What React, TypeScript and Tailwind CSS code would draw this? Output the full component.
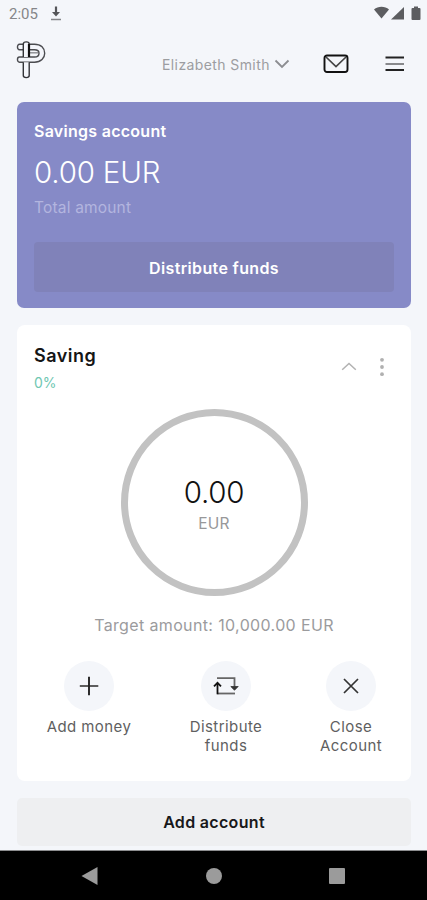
import type { ReactNode } from 'react'

function StatusBar() {
  return (
    <div className="flex h-[27px] items-center justify-between pl-[9px] pr-[6px]">
      <div className="flex items-center gap-[13px]">
        <span className="pt-px font-['Roboto',sans-serif] text-[15px] leading-none text-[#858689]">2:05</span>
        <svg className="-ml-px h-4 w-[12px]" viewBox="0 0 12 16" fill="none">
          <path d="M6 .5v8" stroke="#555659" strokeWidth="2.200" />
          <path d="M2 6h8L6 10.500z" fill="#555659" />
          <path d="M1 13.500h10" stroke="#858689" strokeWidth="1.500" />
        </svg>
      </div>
      <svg className="h-[15px] w-[48px]" viewBox="0 0 48 15" fill="#5c5d60">
        <path d="M1 3.500C5-.2 12-.2 16 3.500L8.500 12.500z" />
        <path d="M18 13.500L31 1v12.500z" />
        <path d="M38.500 3q0-1 1-1H41V.5h4V2h1.500q1 0 1 1v10q0 1-1 1h-7q-1 0-1-1z" />
      </svg>
    </div>
  )
}

function Logo() {
  return (
    <svg className="h-[38px] w-[30px]" viewBox="0 0 30 38" fill="none" strokeWidth="1.400">
      <path
        d="M3.500 3.200H18.500C25 3.200 28.700 7.300 28.700 12.200S25 21.200 18.500 21.200H3.500C.8 21.200 .8 16 3.500 16H18.500C21.500 16 23 14.500 23 12.200S21.500 8.700 18.500 8.700H3.500C.8 8.700 .8 3.200 3.500 3.200z"
        stroke="#4b4c50"
        fill="#f4f6fb"
      />
      <path d="M14 11.800h8" stroke="#8b8c90" />
      <path d="M7.300 16V3C7.300.2 13.200.2 13.200 3V16" stroke="#333438" fill="#f4f6fb" />
      <path d="M7.300 21.200V34.500C7.300 37.300 13.200 37.300 13.200 34.500V21.200" stroke="#333438" fill="#f4f6fb" />
      <path d="M13 3V16" stroke="#111" strokeWidth="2.200" />
    </svg>
  )
}

function Header() {
  return (
    <header className="flex h-[75px] items-start justify-between pl-4 pr-[22px] pt-[14px]">
      <Logo />
      <div className="flex h-[46px] items-center">
        <button className="flex items-center text-[14px] leading-none tracking-[.4px] text-[#9c9da1]">
          <span className="w-[108px] whitespace-nowrap pt-px text-left">Elizabeth Smith</span>
          <svg className="ml-1 h-[10px] w-4" viewBox="0 0 16 10" fill="none" stroke="#8c8d91" strokeWidth="1.800">
            <path d="M1.500 1.500L8 8l6.500-6.500" />
          </svg>
        </button>
        <svg className="ml-[33px] h-5 w-[26px]" viewBox="0 0 26 20" fill="none" stroke="#111">
          <rect x="1.500" y="1.500" width="23" height="16.500" rx="2.500" strokeWidth="1.900" />
          <path d="M3 3l10 9.500L23 3" stroke="#444" strokeWidth="1.700" />
        </svg>
        <svg className="ml-9 h-4 w-5" viewBox="0 0 20 16" fill="none" strokeWidth="2">
          <path d="M.5 1.500h18.500M.5 14h18.500" stroke="#222" />
          <path d="M.5 8h18.500" stroke="#88898c" />
        </svg>
      </div>
    </header>
  )
}

function Action({ label, className, children }: { label: string; className: string; children: ReactNode }) {
  return (
    <button className={className}>
      <span className="flex size-[50px] items-center justify-center rounded-full bg-[#f4f6fa]">{children}</span>
      <span className="mt-[6px] text-center text-[15px] leading-[19px] tracking-[.42px] text-[#5f5f61]">{label}</span>
    </button>
  )
}

export default function App() {
  return (
    <div className="flex h-[900px] w-[427px] flex-col overflow-hidden bg-[#f4f6fa] font-['Inter',sans-serif]">
      <StatusBar />
      <Header />

      <main className="flex flex-1 flex-col pl-[17px] pr-4">
        {/* total balance */}
        <section className="flex h-[206px] flex-col rounded-[7px] bg-[#868ac7] px-[17px] pt-[19px] text-white">
          <h2 className="text-[16px] font-semibold leading-5 tracking-[.27px]">Savings account</h2>
          <p className="mt-[13px] text-[29.500px] font-light leading-9 tracking-[-.2px]">0.00 EUR</p>
          <p className="mt-2 text-[15.500px] leading-5 tracking-[.18px] text-[#b3b5df]">Total amount</p>
          <button className="mt-6 h-[50px] rounded-[4px] bg-[#8082b9] pt-0.5 text-[16px] font-semibold tracking-[.35px]">
            Distribute funds
          </button>
        </section>

        {/* savings goal */}
        <section className="mt-[17px] h-[456px] rounded-[8px] bg-white px-[17px] pt-5">
          <div className="flex justify-between">
            <div>
              <h2 className="text-[18px] font-semibold leading-[22px] tracking-[.5px] text-[#151515]">Saving</h2>
              <p className="mt-[6px] text-[14px] leading-5 text-[#6fc7b2]">0%</p>
            </div>
            <div className="flex h-[43px] items-center gap-[22px] pr-[9px]">
              <svg className="h-[9px] w-4" viewBox="0 0 16 9" fill="none" stroke="#b2b2b2" strokeWidth="1.500">
                <path d="M1.200 7.800L8 1.500l6.800 6.300" />
              </svg>
              <svg className="h-5 w-[6px]" viewBox="0 0 6 20" fill="#b0b0b0">
                <circle cx="3" cy="2.800" r="1.900" />
                <circle cx="3" cy="10" r="1.900" />
                <circle cx="3" cy="17.200" r="1.900" />
              </svg>
            </div>
          </div>

          <div className="mx-auto mt-4 flex size-[187px] flex-col items-center rounded-full border-[7px] border-[#c2c2c2] pt-[58px]">
            <span className="text-[29.500px] font-light leading-9 tracking-[-.3px] text-[#111]">0.00</span>
            <span className="mt-1 text-[15.500px] leading-5 tracking-[.2px] text-[#98989a]">EUR</span>
          </div>
          <p className="mt-[19px] whitespace-nowrap text-center text-[16px] leading-5 tracking-[.36px] text-[#9b9b9d]">
            Target amount: 10,000.00 EUR
          </p>

          <div className="mt-[26px] flex">
            <Action label="Add money" className="ml-[5px] flex w-[100px] flex-col items-center">
              <svg className="size-5" viewBox="0 0 20 20" fill="none">
                <path d="M.8 10h18.500" stroke="#555" strokeWidth="1.900" />
                <path d="M10 .8v18.500" stroke="#222" strokeWidth="1.900" />
              </svg>
            </Action>
            <Action label="Distribute funds" className="ml-[47px] flex w-20 flex-col items-center">
              <svg className="h-5 w-[26px]" viewBox="0 0 26 20" fill="none" strokeWidth="1.800">
                <path d="M4 2.200H21.500V11" stroke="#666" />
                <path d="M22 17.500H4.500" stroke="#666" />
                <path d="M4.500 18.300V7" stroke="#111" />
                <path d="M1 10.300L4.500 6.800 8 10.300" stroke="#111" />
                <path d="M17.800 10.500h7.400l-3.700 3.700z" fill="#333" stroke="#333" strokeWidth=".8" />
              </svg>
            </Action>
            <Action label="Close Account" className="ml-[45px] flex w-20 flex-col items-center">
              <svg className="size-4" viewBox="0 0 16 16" fill="none" stroke="#333" strokeWidth="1.700">
                <path d="M1 1l14 14M15 1L1 15" />
              </svg>
            </Action>
          </div>
        </section>

        <button className="mt-[17px] h-12 rounded-[5px] bg-[#eeeff1] text-[16px] font-semibold tracking-[.32px] text-[#18181a]">
          Add account
        </button>
      </main>

      <nav className="flex h-[50px] items-center border-t border-[#8c8d8f] bg-black pl-[81px]">
        <svg className="h-5 w-[17px]" viewBox="0 0 17 20" fill="#9b9b9b">
          <path d="M.5 10L16.500 1v18z" />
        </svg>
        <span className="ml-[108px] size-4 rounded-full bg-[#9b9b9b]" />
        <span className="ml-[107px] size-4 rounded-[1px] bg-[#9b9b9b]" />
      </nav>
    </div>
  )
}
